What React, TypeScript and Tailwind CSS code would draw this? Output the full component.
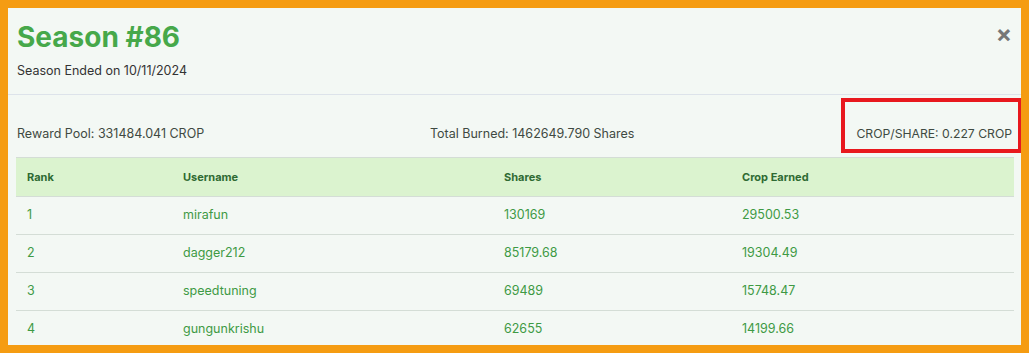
import React from "react";

const ROWS = [
  { rank: 1, user: "mirafun", shares: "130169", crop: "29500.53" },
  { rank: 2, user: "dagger212", shares: "85179.68", crop: "19304.49" },
  { rank: 3, user: "speedtuning", shares: "69489", crop: "15748.47" },
  { rank: 4, user: "gungunkrishu", shares: "62655", crop: "14199.66" },
];

export default function App() {
  return (
    <div className="h-[353px] w-[1029px] overflow-hidden bg-[#f59c12] p-[8px] font-['Inter',sans-serif]">
      <div className="relative h-[337px] w-[1013px] overflow-hidden bg-[#f3f8f4]">
        {/* Header */}
        <div className="flex items-start justify-between border-b border-[#dde3ea] px-[9px] pt-[11px] pb-[15px]">
          <div>
            <h1 className="text-[28px] font-bold leading-[36px] text-[#46a84a]">Season #86</h1>
            <p className="mt-[8px] text-[12.5px] leading-[16px] text-[#333]">Season Ended on 10/11/2024</p>
          </div>
          <span className="mt-[3px] text-[24px] font-bold leading-[24px] text-[#777]">×</span>
        </div>

        {/* Stats */}
        <div className="flex items-center px-[9px] pt-[31px] pb-[15px] text-[12.5px] leading-[16px] text-[#3f4a42]">
          <div className="w-[413px]">Reward Pool: 331484.041 CROP</div>
          <div className="flex-1">Total Burned: 1462649.790 Shares</div>
          <div className="text-[12.2px]">CROP/SHARE: 0.227 CROP</div>
        </div>

        {/* Table */}
        <div className="mx-[8px]">
          <table className="w-[998px] table-fixed border-collapse text-left">
            <thead>
              <tr className="h-[39px] border-y border-[#d4ddd6] bg-[#dbf3cf] text-[11px] font-bold text-[#2f6a33]">
                <th className="w-[156px] pl-[11px]">Rank</th>
                <th className="w-[321px] pl-[11px]">Username</th>
                <th className="w-[238px] pl-[11px]">Shares</th>
                <th className="pl-[11px]">Crop Earned</th>
              </tr>
            </thead>
            <tbody>
              {ROWS.map((r) => (
                <tr key={r.rank} className="h-[38px] border-b border-[#d4ddd6] text-[12.5px] text-[#3e9a44]">
                  <td className="pl-[11px]">{r.rank}</td>
                  <td className="pl-[11px]">{r.user}</td>
                  <td className="pl-[11px]">{r.shares}</td>
                  <td className="pl-[11px]">{r.crop}</td>
                </tr>
              ))}
            </tbody>
          </table>
        </div>

        {/* Annotation box */}
        <div className="absolute left-[833px] top-[90px] h-[55px] w-[181px] border-[4px] border-[#e8181e]" />
      </div>
    </div>
  );
}
